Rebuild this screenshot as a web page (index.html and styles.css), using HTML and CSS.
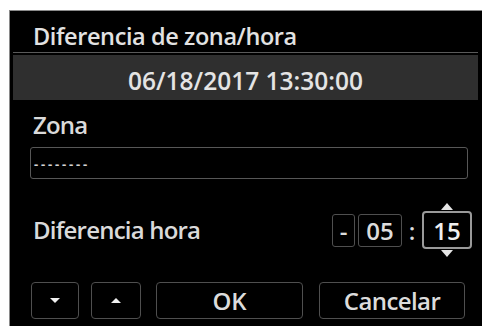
FILE: index.html
```html
<!DOCTYPE html>
<html lang="es">
<head>
<meta charset="utf-8">
<link rel="stylesheet" href="styles.css">
</head>
<body>
<div class="panel">
  <div class="title">Diferencia de zona/hora</div>
  <div class="sep"></div>
  <div class="datebar">06/18/2017 13:30:00</div>
  <div class="content">
    <div class="label zona">Zona</div>
    <div class="input"><span class="dashes">--------</span></div>
    <div class="diff-row">
      <div class="label">Diferencia hora</div>
      <div class="controls">
        <div class="box sign">-</div>
        <div class="box hh">05</div>
        <div class="colon">:</div>
        <div class="box mm selected">
          15
          <span class="arrow up"></span>
          <span class="arrow down"></span>
        </div>
      </div>
    </div>
    <div class="buttons">
      <div class="btn small"><span class="tri tri-down"></span></div>
      <div class="btn small up-btn"><span class="tri tri-up"></span></div>
      <div class="btn ok">OK</div>
      <div class="btn cancel">Cancelar</div>
    </div>
  </div>
</div>
</body>
</html>
```

FILE: styles.css
```css
html, body {
  margin: 0;
  padding: 0;
  background: #ffffff;
}
body {
  width: 482px;
  height: 326px;
  overflow: hidden;
  font-family: "Open Sans", "Noto Sans", sans-serif;
  font-weight: 600;
}
.panel {
  margin-left: 9px;
  margin-top: 10px;
  width: 473px;
  height: 316px;
  background: #000;
  border-top: 1px solid #8a8a8a;
  border-left: 1px solid #8a8a8a;
  box-sizing: border-box;
  color: #dcdcdc;
  display: flex;
  flex-direction: column;
}
.title {
  height: 41px;
  box-sizing: border-box;
  padding-left: 23px;
  padding-top: 11px;
  font-size: 23.5px;
  line-height: 29px;
  color: #e2e2e2;
  letter-spacing: -0.4px;
}
.sep {
  height: 1px;
  margin: 0 4px 0 3px;
  background: #5a5a5a;
}
.datebar {
  height: 45px;
  margin: 2px 4px 0 3px;
  background: #2f2f2f;
  text-align: center;
  font-size: 24.5px;
  line-height: 45px;
  padding-top: 3px;
  box-sizing: border-box;
  color: #e4e4e4;
  letter-spacing: 0;
}
.content {
  padding: 0 10px 0 20px;
  display: flex;
  flex-direction: column;
}
.label {
  font-size: 24px;
  line-height: 32px;
  color: #dadada;
  letter-spacing: -0.8px;
}
.zona {
  margin-top: 9px;
  padding-left: 3px;
}
.input {
  margin-top: 6px;
  margin-right: 4px;
  height: 32px;
  box-sizing: border-box;
  border: 1px solid #575757;
  border-radius: 3px;
  display: flex;
  align-items: center;
  padding-left: 3px;
}
.dashes {
  font-size: 13px;
  line-height: 10px;
  letter-spacing: 2.8px;
  font-weight: bold;
  color: #d4d4d4;
  margin-top: 2px;
}
.diff-row {
  margin-top: 32px;
  height: 38px;
  display: flex;
  align-items: center;
  justify-content: space-between;
  padding-left: 3px;
}
.controls {
  display: flex;
  align-items: center;
}
.box {
  height: 33px;
  box-sizing: border-box;
  border: 1px solid #4f4f4f;
  border-radius: 3px;
  display: flex;
  align-items: center;
  justify-content: center;
  font-size: 24px;
  color: #dcdcdc;
  position: relative;
}
.sign {
  width: 23px;
}
.hh {
  width: 44px;
  margin-left: 3px;
}
.colon {
  width: 20px;
  text-align: center;
  font-size: 24px;
  line-height: 33px;
}
.mm {
  width: 50px;
  height: 38px;
  border: 2px solid #9a9a9a;
  border-radius: 4px;
  color: #f0f0f0;
}
.arrow {
  position: absolute;
  left: 50%;
  width: 0;
  height: 0;
  margin-left: -6px;
  border-left: 6px solid transparent;
  border-right: 6px solid transparent;
}
.arrow.up {
  top: -10px;
  border-bottom: 7px solid #e6e6e6;
}
.arrow.down {
  bottom: -10px;
  border-top: 7px solid #e6e6e6;
}
.buttons {
  margin-top: 33px;
  margin-left: 1px;
  display: flex;
  height: 37px;
}
.btn {
  height: 37px;
  box-sizing: border-box;
  border: 1px solid #4f4f4f;
  border-radius: 4px;
  display: flex;
  align-items: center;
  justify-content: center;
  font-size: 24px;
  color: #dcdcdc;
}
.small {
  width: 48px;
}
.up-btn {
  width: 50px;
  margin-left: 12px;
}
.ok {
  width: 147px;
  margin-left: 15px;
}
.cancel {
  width: 146px;
  margin-left: 16px;
  letter-spacing: -0.6px;
}
.tri {
  width: 0;
  height: 0;
  border-left: 5px solid transparent;
  border-right: 5px solid transparent;
}
.tri-down {
  border-top: 5px solid #f0f0f0;
}
.tri-up {
  border-bottom: 5px solid #f0f0f0;
}
```
